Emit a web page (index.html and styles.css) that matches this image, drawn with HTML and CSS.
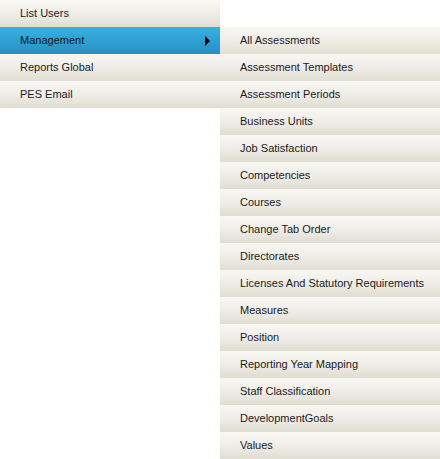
FILE: index.html
```html
<!DOCTYPE html>
<html>
<head>
<meta charset="utf-8">
<link rel="stylesheet" href="styles.css">
</head>
<body>
<div class="menus">
  <ul class="menu main">
    <li class="item">List Users</li>
    <li class="item active">Management<span class="arrow"></span></li>
    <li class="item">Reports Global</li>
    <li class="item">PES Email</li>
  </ul>
  <ul class="menu sub">
    <li class="item">All Assessments</li>
    <li class="item">Assessment Templates</li>
    <li class="item">Assessment Periods</li>
    <li class="item">Business Units</li>
    <li class="item">Job Satisfaction</li>
    <li class="item">Competencies</li>
    <li class="item">Courses</li>
    <li class="item">Change Tab Order</li>
    <li class="item">Directorates</li>
    <li class="item">Licenses And Statutory Requirements</li>
    <li class="item">Measures</li>
    <li class="item">Position</li>
    <li class="item">Reporting Year Mapping</li>
    <li class="item">Staff Classification</li>
    <li class="item">DevelopmentGoals</li>
    <li class="item">Values</li>
  </ul>
</div>
</body>
</html>
```
FILE: styles.css
```css
html, body {
  margin: 0;
  padding: 0;
  background: #ffffff;
}
body {
  font-family: Tahoma, "DejaVu Sans", "Liberation Sans", sans-serif;
  font-size: 11px;
  color: #1b1b1b;
}
.menus {
  display: flex;
  align-items: flex-start;
}
.menu {
  list-style: none;
  margin: 0;
  padding: 0;
  width: 220px;
}
.sub {
  margin-top: 27px;
}
.item {
  position: relative;
  height: 27px;
  line-height: 27px;
  padding-left: 20px;
  background: linear-gradient(#f8f7f3 0%, #efede7 50%, #e0ddd2 100%);
  white-space: nowrap;
  font-family: "Liberation Sans", Arial, sans-serif;
  font-size: 11px;
}
.active {
  background: linear-gradient(#39b1e1 0%, #2fa0d3 50%, #2a8fc2 100%);
  color: #0d1a22;
}
.arrow {
  position: absolute;
  left: 205px;
  top: 9px;
  width: 0;
  height: 0;
  border-top: 5px solid transparent;
  border-bottom: 5px solid transparent;
  border-left: 5px solid #000;
}
```
